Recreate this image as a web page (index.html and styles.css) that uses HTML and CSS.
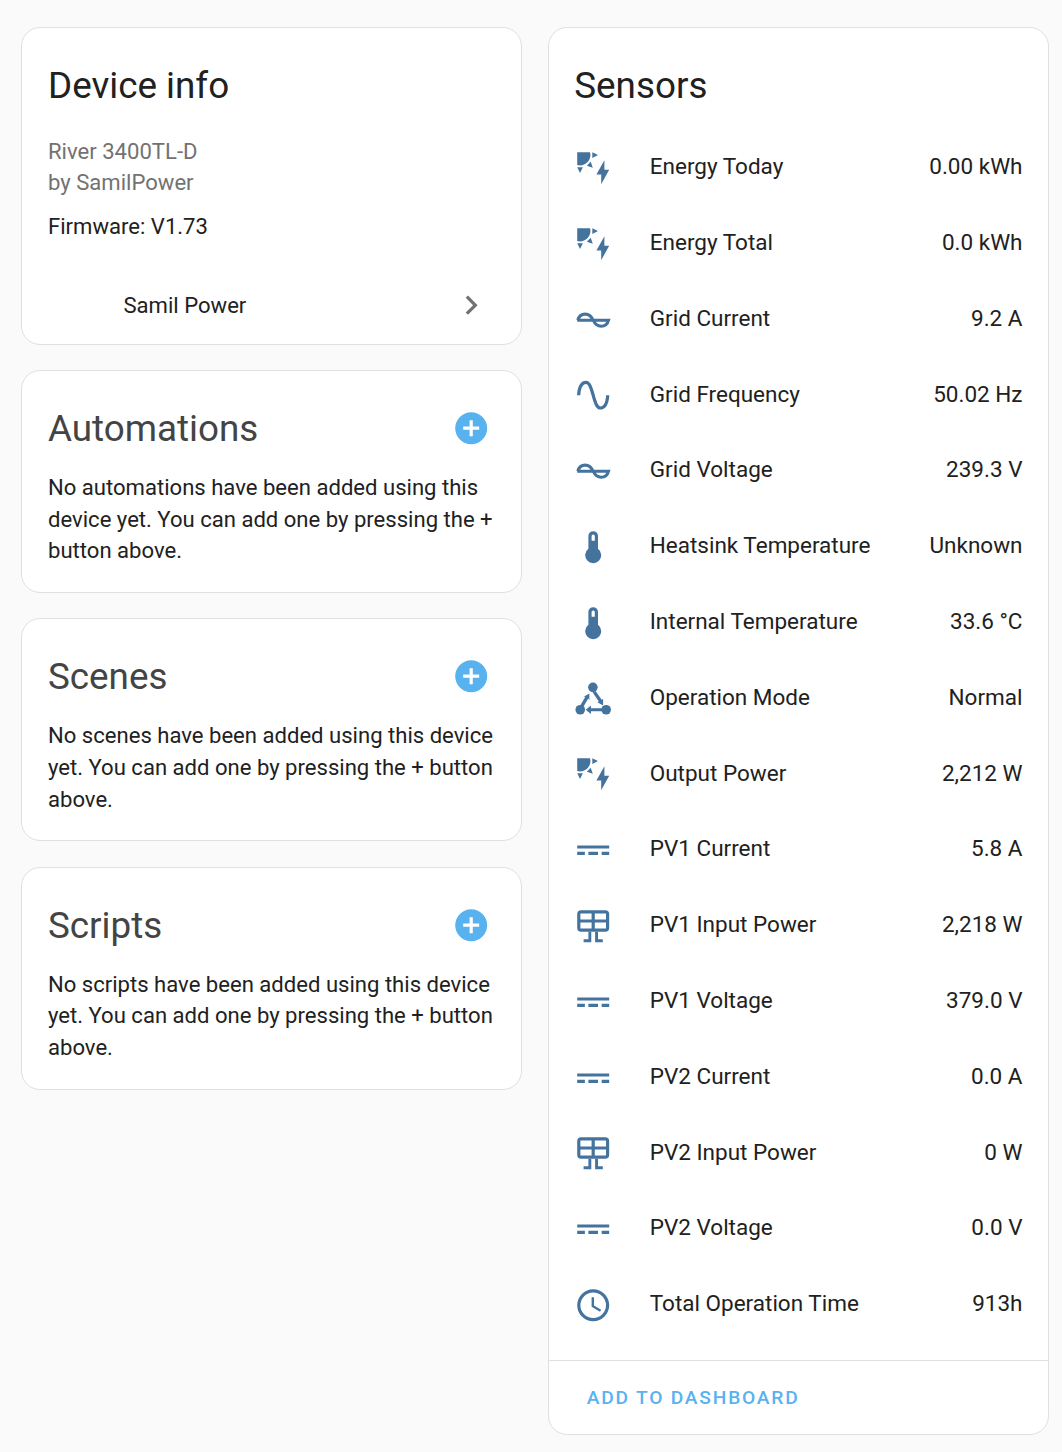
FILE: index.html
```html
<!DOCTYPE html>
<html>
<head>
    <meta charset="utf-8">
    <title>Device</title>
    <link rel="stylesheet" href="styles.css">
</head>
<body>
    <svg class="defs" width="0" height="0">
        <symbol id="i-solar" viewBox="0 0 24 24"><path d="M11.45,2V5.55L15,3.77L11.45,2M10.45,8L8,10.46L11.75,11.71L10.45,8M2,11.45L3.77,15L5.55,11.45H2M10,2H2V10C2.57,10.17 3.17,10.25 3.77,10.25C7.35,10.26 10.26,7.35 10.27,3.75C10.26,3.16 10.17,2.57 10,2M17,22V16H14L19,7V13H22L17,22Z"/></symbol>
        <symbol id="i-ac" viewBox="0 0 24 24"><path class="strokePath" d="M2,12H21.6C21,14.3 19.2,15.8 17,15.8C14.8,15.8 13,14.2 12,12C11,9.8 9.2,8.2 7,8.2C4.8,8.2 3,9.7 2.4,12"/></symbol>
        <symbol id="i-sine" viewBox="0 0 24 24"><path d="M16.5,21C13.5,21 12.31,16.76 11.05,12.28C10.14,9.04 9,5 7.5,5C4.11,5 4,11.93 4,12H2C2,11.63 2.06,3 7.5,3C10.5,3 11.71,7.25 12.97,11.74C13.83,14.8 15,19 16.5,19C19.94,19 20.06,12.07 20.06,12H22.06C22.06,12.37 22,21 16.5,21Z"/></symbol>
        <symbol id="i-temp" viewBox="0 0 24 24"><path d="M15 13V5A3 3 0 0 0 9 5V13A5 5 0 1 0 15 13M12 4A1 1 0 0 1 13 5V8H11V5A1 1 0 0 1 12 4Z"/></symbol>
        <symbol id="i-mode" viewBox="0 0 24 24"><circle cx="11.8" cy="4.6" r="3"/><circle cx="3.9" cy="18.6" r="3"/><circle cx="20.1" cy="18.6" r="3"/><path d="M3.7,16.3L7.1,10.5L6,10.45L9.6,8.4V12.55L8.9,11.5L5.5,17.3Z"/><path d="M13.5,6.8L17.3,12.4L18.2,11.85V16L14.6,13.95L15.5,13.4L11.7,7.8Z"/><path d="M17.5,17.65V19.55H10.6V21.2L7.3,18.6L10.6,16V17.65Z"/></symbol>
        <symbol id="i-dc" viewBox="0 0 24 24"><path d="M2,9H22V11H2V9M2,13H6.8V15H2V13M9,13H15V15H9V13M17.3,13H22V15H17.3V13Z"/></symbol>
        <symbol id="i-panel" viewBox="0 0 24 24"><path d="M4.5,2H19.5A2.5,2.5 0 0,1 22,4.5V13A2.5,2.5 0 0,1 19.5,15.5H4.5A2.5,2.5 0 0,1 2,13V4.5A2.5,2.5 0 0,1 4.5,2M4,4V7.8H11V4H4M13,4V7.8H20V4H13M4,9.7V13.5H11V9.7H4M13,9.7V13.5H20V9.7H13Z" fill-rule="evenodd"/><path d="M9,15.5H10.8V22H6V20.2H9V15.5M13.2,15.5H15V20.2H18V22H13.2V15.5Z"/></symbol>
        <symbol id="i-clock" viewBox="0 0 24 24"><path d="M12,20A8,8 0 0,0 20,12A8,8 0 0,0 12,4A8,8 0 0,0 4,12A8,8 0 0,0 12,20M12,2A10,10 0 0,1 22,12A10,10 0 0,1 12,22C6.47,22 2,17.5 2,12A10,10 0 0,1 12,2M12.5,7V12.25L17,14.92L16.25,16.15L11,13V7H12.5Z"/></symbol>
        <symbol id="i-plus" viewBox="0 0 24 24"><path d="M17,13H13V17H11V13H7V11H11V7H13V11H17M12,2A10,10 0 0,0 2,12A10,10 0 0,0 12,22A10,10 0 0,0 22,12A10,10 0 0,0 12,2Z"/></symbol>
        <symbol id="i-chevron" viewBox="0 0 24 24"><path d="M8.59,16.58L13.17,12L8.59,7.41L10,6L16,12L10,18L8.59,16.58Z"/></symbol>
    </svg>

    <div class="columns">
        <div class="column">
            <div class="card">
                <h1 class="cardTitle cardTitleDark">Device info</h1>
                <div class="model">River 3400TL-D</div>
                <div class="model">by SamilPower</div>
                <div class="firmware">Firmware: V1.73</div>
                <div class="deviceLink">
                    <span>Samil Power</span>
                    <svg class="chevron"><use href="#i-chevron"/></svg>
                </div>
            </div>

            <div class="card">
                <div class="cardHeader">
                    <h1 class="cardTitle">Automations</h1>
                    <svg class="plus"><use href="#i-plus"/></svg>
                </div>
                <p class="emptyText">No automations have been added using this device yet. You can add one by pressing the + button above.</p>
            </div>

            <div class="card">
                <div class="cardHeader">
                    <h1 class="cardTitle">Scenes</h1>
                    <svg class="plus"><use href="#i-plus"/></svg>
                </div>
                <p class="emptyText">No scenes have been added using this device yet. You can add one by pressing the + button above.</p>
            </div>

            <div class="card">
                <div class="cardHeader">
                    <h1 class="cardTitle">Scripts</h1>
                    <svg class="plus"><use href="#i-plus"/></svg>
                </div>
                <p class="emptyText">No scripts have been added using this device yet. You can add one by pressing the + button above.</p>
            </div>
        </div>

        <div class="column">
            <div class="card sensorCard">
                <h1 class="cardTitle cardTitleDark">Sensors</h1>
                <div class="sensorList">
                    <div class="sensor"><svg class="sensorIcon"><use href="#i-solar"/></svg><span class="sensorName">Energy Today</span><span>0.00 kWh</span></div>
                    <div class="sensor"><svg class="sensorIcon"><use href="#i-solar"/></svg><span class="sensorName">Energy Total</span><span>0.0 kWh</span></div>
                    <div class="sensor"><svg class="sensorIcon"><use href="#i-ac"/></svg><span class="sensorName">Grid Current</span><span>9.2 A</span></div>
                    <div class="sensor"><svg class="sensorIcon"><use href="#i-sine"/></svg><span class="sensorName">Grid Frequency</span><span>50.02 Hz</span></div>
                    <div class="sensor"><svg class="sensorIcon"><use href="#i-ac"/></svg><span class="sensorName">Grid Voltage</span><span>239.3 V</span></div>
                    <div class="sensor"><svg class="sensorIcon"><use href="#i-temp"/></svg><span class="sensorName">Heatsink Temperature</span><span>Unknown</span></div>
                    <div class="sensor"><svg class="sensorIcon"><use href="#i-temp"/></svg><span class="sensorName">Internal Temperature</span><span>33.6 °C</span></div>
                    <div class="sensor"><svg class="sensorIcon"><use href="#i-mode"/></svg><span class="sensorName">Operation Mode</span><span>Normal</span></div>
                    <div class="sensor"><svg class="sensorIcon"><use href="#i-solar"/></svg><span class="sensorName">Output Power</span><span>2,212 W</span></div>
                    <div class="sensor"><svg class="sensorIcon"><use href="#i-dc"/></svg><span class="sensorName">PV1 Current</span><span>5.8 A</span></div>
                    <div class="sensor"><svg class="sensorIcon"><use href="#i-panel"/></svg><span class="sensorName">PV1 Input Power</span><span>2,218 W</span></div>
                    <div class="sensor"><svg class="sensorIcon"><use href="#i-dc"/></svg><span class="sensorName">PV1 Voltage</span><span>379.0 V</span></div>
                    <div class="sensor"><svg class="sensorIcon"><use href="#i-dc"/></svg><span class="sensorName">PV2 Current</span><span>0.0 A</span></div>
                    <div class="sensor"><svg class="sensorIcon"><use href="#i-panel"/></svg><span class="sensorName">PV2 Input Power</span><span>0 W</span></div>
                    <div class="sensor"><svg class="sensorIcon"><use href="#i-dc"/></svg><span class="sensorName">PV2 Voltage</span><span>0.0 V</span></div>
                    <div class="sensor"><svg class="sensorIcon"><use href="#i-clock"/></svg><span class="sensorName">Total Operation Time</span><span>913h</span></div>
                </div>
                <div class="cardActions">ADD TO DASHBOARD</div>
            </div>
        </div>
    </div>
</body>
</html>
```
FILE: styles.css
```css
html, body {
    margin: 0;
    height: 1452px;
    overflow: hidden;
    background-color: #fafafa;
    color: #212121;
    font-family: Roboto, "Liberation Sans", sans-serif;
    font-size: 22.08px;
}

.defs {
    position: absolute;
}

.columns {
    display: flex;
    gap: 26px;
    padding: 27px 13.5px 0 21px;
}

.column {
    display: flex;
    flex-direction: column;
    gap: 25.6px;
    width: 501px;
}

.card {
    background-color: #fff;
    border: 1px solid #e0e0e0;
    border-radius: 19.2px;
    padding: 0 26px;
}

.cardTitle {
    margin: 0;
    font-size: 36.8px;
    font-weight: 400;
    line-height: 51px;
    color: #444;
}

.cardTitleDark {
    color: #212121;
}

.card > .cardTitle,
.cardHeader {
    padding-top: 32px;
}

.cardHeader {
    display: flex;
    justify-content: space-between;
    align-items: center;
}

.plus {
    width: 38.4px;
    height: 38.4px;
    margin: -1px 4px 0 0;
    fill: #58b2f0;
}

.emptyText {
    margin: 18px 0 25px;
    line-height: 31.6px;
}

.model {
    color: #727272;
    line-height: 31px;
}

.model:first-of-type {
    margin-top: 25px;
}

.firmware {
    margin-top: 13px;
    line-height: 31.5px;
}

.deviceLink {
    display: flex;
    align-items: center;
    justify-content: space-between;
    margin-top: 43px;
    padding: 0 4px 19px 75.5px;
    line-height: 39px;
}

.chevron {
    width: 38.4px;
    height: 38.4px;
    fill: #727272;
}

.sensorCard {
    padding: 0;
}

.sensorCard > .cardTitle {
    padding-left: 25.5px;
}

.sensorList {
    padding: 17.4px 25px 18.6px 25px;
    font-size: 22.5px;
}

.sensor {
    display: flex;
    align-items: center;
    height: 75.8px;
}

.sensorIcon {
    flex: none;
    width: 38.4px;
    height: 38.4px;
    margin: 4px 37.6px 0 0;
    fill: #44739e;
}

.strokePath {
    fill: none;
    stroke: #44739e;
    stroke-width: 1.9;
}

.sensorName {
    flex: 1;
}

.cardActions {
    border-top: 1px solid #e0e0e0;
    padding: 0 38px;
    height: 73px;
    line-height: 74px;
    color: #58b2f0;
    font-size: 19.2px;
    font-weight: 500;
    letter-spacing: 1.78px;
}
```
